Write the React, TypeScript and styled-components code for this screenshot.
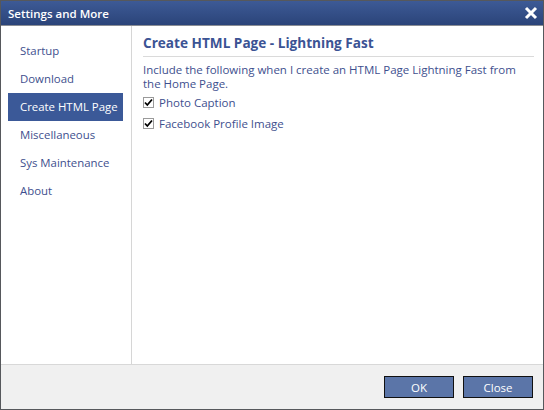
import { FC, useState } from "react";
import styled, { createGlobalStyle } from "styled-components";

const GlobalStyle = createGlobalStyle`
    html, body {
        margin: 0;
        padding: 0;
        background: #ffffff;
    }
    body {
        font-family: "Open Sans", "Noto Sans", sans-serif;
    }
`;

const WindowDiv = styled.div`
    width: 544px;
    height: 410px;
    box-sizing: border-box;
    border: 1px solid #56585c;
    display: flex;
    flex-direction: column;
    background: #ffffff;
`;

const TitleBar = styled.div`
    height: 24px;
    flex: none;
    display: flex;
    align-items: center;
    justify-content: space-between;
    padding: 0 5px 0 7px;
    background: linear-gradient(#3d5a96, #2b4479);
    border-bottom: 1px solid #8a8d94;
    color: #ffffff;
    font-size: 11.5px;
    font-weight: 600;
`;

const CloseX = styled.button`
    border: none;
    background: none;
    padding: 0;
    width: 14px;
    height: 14px;
    cursor: pointer;
    display: flex;
`;

const Body = styled.div`
    flex: 1;
    display: flex;
    min-height: 0;
`;

const Sidebar = styled.nav`
    width: 131px;
    flex: none;
    border-right: 1px solid #d6d6d6;
    padding: 11px 8px 0 7px;
    box-sizing: border-box;
    display: flex;
    flex-direction: column;
`;

interface NavItemProps {
    selected: boolean;
}

const NavItem = styled.div<NavItemProps>`
    height: 28px;
    line-height: 27px;
    padding-left: 12px;
    font-size: 11.4px;
    white-space: nowrap;
    cursor: pointer;
    color: ${(props) => (props.selected ? "#ffffff" : "#3e4f8e")};
    background-color: ${(props) => (props.selected ? "#3b5998" : "transparent")};
`;

const Content = styled.section`
    flex: 1;
    padding: 7px 9px 0 11px;
    color: #3e4f8e;
    font-size: 11.5px;
`;

const Heading = styled.h2`
    margin: 0;
    font-size: 13.6px;
    font-weight: 700;
    color: #3b5394;
    padding-bottom: 4px;
    border-bottom: 1px solid #dadada;
`;

const Paragraph = styled.p`
    margin: 6px 0 1px;
    line-height: 14px;
    width: 380px;
`;

const CheckRow = styled.label`
    display: flex;
    align-items: center;
    gap: 5px;
    height: 21px;
    cursor: pointer;
`;

const CheckBox = styled.span`
    width: 9px;
    height: 9px;
    border: 1px solid #9a9a9a;
    background: #ffffff;
    display: flex;
    align-items: center;
    justify-content: center;
`;

const Footer = styled.div`
    height: 45px;
    box-sizing: border-box;
    flex: none;
    background: #f0f0f0;
    border-top: 1px solid #d8d8d8;
    display: flex;
    justify-content: flex-end;
    align-items: center;
    gap: 9px;
    padding: 0 10px 0 0;
`;

const DialogButton = styled.button`
    width: 70px;
    height: 22px;
    background: #5b75a8;
    border: 1px solid #111111;
    color: #ffffff;
    font-family: "Open Sans", "Noto Sans", sans-serif;
    font-size: 11.5px;
    cursor: pointer;
`;

const sections = [
    "Startup",
    "Download",
    "Create HTML Page",
    "Miscellaneous",
    "Sys Maintenance",
    "About",
];

const Check: FC<{ label: string }> = ({ label }) => {
    const [checked, setChecked] = useState(true);
    return (
        <CheckRow onClick={() => setChecked(!checked)}>
            <CheckBox>
                {checked && (
                    <svg width="9" height="9" viewBox="0 0 9 9">
                        <path
                            d="M1 4.5 L3.3 7 L8 1.5"
                            fill="none"
                            stroke="#000"
                            strokeWidth="1.8"
                        />
                    </svg>
                )}
            </CheckBox>
            {label}
        </CheckRow>
    );
};

const App: FC = () => {
    const [selected, setSelected] = useState(2);

    return (
        <WindowDiv>
            <GlobalStyle />
            <TitleBar>
                Settings and More
                <CloseX aria-label="Close">
                    <svg width="14" height="14" viewBox="0 0 14 14">
                        <path
                            d="M2 2 L12 12 M12 2 L2 12"
                            stroke="#fff"
                            strokeWidth="3"
                        />
                    </svg>
                </CloseX>
            </TitleBar>
            <Body>
                <Sidebar>
                    {sections.map((name, idx) => (
                        <NavItem
                            key={name}
                            selected={idx === selected}
                            onClick={() => setSelected(idx)}
                        >
                            {name}
                        </NavItem>
                    ))}
                </Sidebar>
                <Content>
                    <Heading>Create HTML Page - Lightning Fast</Heading>
                    <Paragraph>
                        Include the following when I create an HTML Page
                        Lightning Fast from the Home Page.
                    </Paragraph>
                    <Check label="Photo Caption" />
                    <Check label="Facebook Profile Image" />
                </Content>
            </Body>
            <Footer>
                <DialogButton>OK</DialogButton>
                <DialogButton>Close</DialogButton>
            </Footer>
        </WindowDiv>
    );
};

export default App;
